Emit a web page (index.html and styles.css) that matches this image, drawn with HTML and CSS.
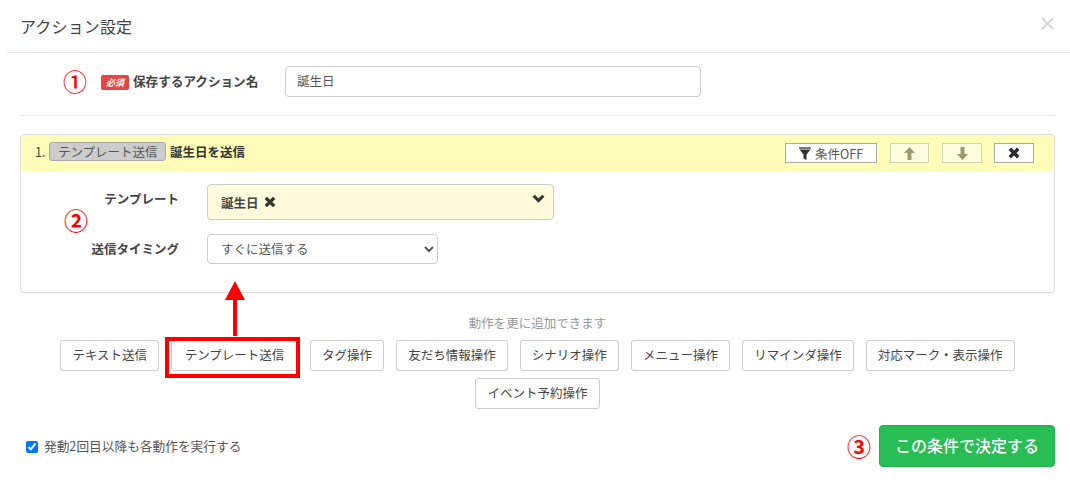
FILE: index.html
```html
<!DOCTYPE html>
<html lang="ja">
<head>
<meta charset="utf-8">
<title>アクション設定</title>
<link rel="stylesheet" href="styles.css">
</head>
<body>
<div class="modal">
  <header class="modal-header">
    <h1 class="modal-title">アクション設定</h1>
    <svg class="close" viewBox="0 0 12 12" width="13" height="13"><path d="M.8.8l10.400 10.400M11.200.8L.8 11.200" stroke="#d4d4d4" stroke-width="1.800" fill="none"/></svg>
  </header>
  <div class="body">
    <div class="name-row">
      <span class="mark mark-1">①</span>
      <label class="name-label"><span class="req">必須</span>保存するアクション名</label>
      <input class="name-input" type="text" value="誕生日">
    </div>
    <section class="card">
      <div class="card-head">
        <div class="card-title"><span class="num">1.</span><span class="type-tag">テンプレート送信</span><b>誕生日を送信</b></div>
        <div class="card-tools">
          <button class="tool tool-cond"><svg viewBox="0 0 12 13" width="12" height="13"><path d="M0 0h12v2H0z" fill="#777"/><path d="M.5 2.500h11L7.500 7.500V13L4.500 11.500v-4z" fill="#333"/></svg>条件OFF</button>
          <button class="tool tool-up"><svg viewBox="0 0 11 13" width="11" height="13"><path d="M5.500 0L11 6H7.500v7h-4V6H0z" fill="#9a9a70"/></svg></button>
          <button class="tool tool-down"><svg viewBox="0 0 11 13" width="11" height="13"><path d="M5.500 13L11 7H7.500V0h-4v7H0z" fill="#9a9a70"/></svg></button>
          <button class="tool tool-del"><svg viewBox="0 0 12 12" width="12" height="12"><path d="M1.800 1.800l8.400 8.400M10.200 1.800l-8.400 8.400" stroke="#2b2b2b" stroke-width="3.400" fill="none"/></svg></button>
        </div>
      </div>
      <div class="card-body">
        <div class="field field-template">
          <div class="field-label">テンプレート</div>
          <div class="tpl-select">
            <span class="tpl-value">誕生日<svg class="tpl-x" viewBox="0 0 12 12" width="12" height="12"><path d="M1.800 1.800l8.400 8.400M10.200 1.800l-8.400 8.400" stroke="#333" stroke-width="3.300" fill="none"/></svg></span>
            <svg class="tpl-caret" viewBox="0 0 12 8" width="13" height="9"><path d="M1.500 1.500L6 6l4.500-4.500" stroke="#333" stroke-width="2.800" fill="none"/></svg>
          </div>
        </div>
        <div class="field">
          <div class="field-label">送信タイミング</div>
          <select class="timing"><option>すぐに送信する</option></select>
        </div>
        <span class="mark mark-2">②</span>
      </div>
    </section>
    <div class="add-area">
      <p class="add-hint">動作を更に追加できます</p>
      <div class="add-buttons">
        <button class="add">テキスト送信</button>
        <button class="add add-hl">テンプレート送信<span class="hl-box"></span><span class="hl-arrow"></span></button>
        <button class="add">タグ操作</button>
        <button class="add">友だち情報操作</button>
        <button class="add">シナリオ操作</button>
        <button class="add">メニュー操作</button>
        <button class="add">リマインダ操作</button>
        <button class="add">対応マーク・表示操作</button>
        <button class="add">イベント予約操作</button>
      </div>
    </div>
    <div class="footer">
      <label class="repeat"><input type="checkbox" checked>発動2回目以降も各動作を実行する</label>
      <div class="submit-wrap">
        <span class="mark mark-3">③</span>
        <button class="submit">この条件で決定する</button>
      </div>
    </div>
  </div>
</div>
</body>
</html>
```
FILE: styles.css
```css
* { box-sizing: border-box; }
html, body { margin: 0; padding: 0; background: #fff; }
body {
  width: 1070px;
  height: 483px;
  overflow: hidden;
  font-family: "Noto Sans CJK JP", "Liberation Sans", sans-serif;
  color: #444;
}
.modal { padding-left: 7px; }
.modal-header {
  height: 53px;
  border-bottom: 1px solid #e5e5e5;
  display: flex;
  align-items: center;
  justify-content: space-between;
  padding: 0 16px 0 13px;
}
.modal-title { margin: 0; font-size: 16px; line-height: 24px; font-weight: 400; color: #444; letter-spacing: 0.15px; }
.close { margin-top: -5px; }
.body { padding: 0 15px 0 13px; }
.name-row {
  height: 63px;
  border-bottom: 1px solid #eaeaea;
  display: flex;
  align-items: center;
  padding-bottom: 6px;
  position: relative;
}
.name-label {
  display: flex;
  align-items: center;
  margin: 0 0 2px 81px;
  font-size: 12.6px;
  font-weight: 700;
  color: #444;
  white-space: nowrap;
  width: 184px;
}
.req {
  background: #e64545;
  color: #fff;
  font-size: 9px;
  font-weight: 700;
  font-style: italic;
  border-radius: 2px;
  width: 28px;
  height: 15px;
  line-height: 15px;
  text-align: center;
  margin: 5px 4px 0 0;
}
.name-input {
  width: 416px;
  height: 31px;
  border: 1px solid #ccc;
  border-radius: 4px;
  padding: 0 11px 2px;
  font: 12.5px "Noto Sans CJK JP", sans-serif;
  color: #555;
  background: #fff;
}
.mark { position: absolute; color: #f00; font-size: 24px; line-height: 24px; font-weight: 700; }
.mark-1 { left: 43px; top: 16px; font-weight: 500; }
.card {
  margin-top: 18px;
  height: 159px;
  border: 1px solid #dcdcdc;
  border-radius: 4px;
  overflow: hidden;
}
.card-head {
  height: 36px;
  background: #fffdb8;
  display: flex;
  align-items: center;
  justify-content: space-between;
  padding: 0 20px 0 14px;
}
.card-title { display: flex; align-items: center; font-size: 12.5px; color: #444; white-space: nowrap; padding-bottom: 3px; }
.num { margin-right: 4px; }
.type-tag {
  background: #ccc;
  border: 1px solid #aaa;
  border-radius: 3px;
  height: 19px;
  line-height: 17px;
  padding: 0 7.500px;
  font-size: 12.500px;
  color: #555;
  margin-right: 4px;
}
.card-title b { font-weight: 700; color: #333; }
.card-tools { display: flex; align-items: center; }
.tool {
  height: 20px;
  margin: 0;
  padding: 0;
  background: #fff;
  border: 1px solid #aaa;
  display: flex;
  align-items: center;
  justify-content: center;
  font: 12.500px "Noto Sans CJK JP", sans-serif;
  color: #555;
}
.tool-cond { width: 92px; gap: 4px; margin-right: 13px; }
.tool-up, .tool-down {
  background: #ffffe0;
  border-color: #d4d4b0;
}
.tool-up { width: 39px; margin-right: 13px; }
.tool-down { width: 40px; margin-right: 12px; }
.tool-del { width: 40px; }
.card-body { position: relative; padding-top: 13px; }
.field { display: flex; align-items: flex-start; }
.field-label {
  width: 158px;
  text-align: right;
  font-size: 12.500px;
  font-weight: 700;
  color: #444;
  margin-right: 28px;
  line-height: 30px;
}
.field-template { margin-bottom: 14px; }
.tpl-select {
  width: 347px;
  height: 36px;
  background: #fffbdb;
  border: 1px solid #ccc;
  border-radius: 4px;
  display: flex;
  justify-content: space-between;
  padding: 9px 8px 0 13px;
}
.tpl-value { display: flex; align-items: center; height: 16px; font-size: 12.500px; font-weight: 700; color: #444; }
.tpl-x { margin-left: 5px; }
.timing {
  width: 231px;
  height: 30px;
  border: 1px solid #ccc;
  border-radius: 4px;
  background: #fff;
  padding: 0 9px 2px;
  font: 12.500px "Noto Sans CJK JP", sans-serif;
  color: #555;
}
.mark-2 { left: 43px; top: 37px; }
.add-area { text-align: center; }
.add-hint { margin: 0; padding-top: 21px; height: 47px; font-size: 12.500px; line-height: 18px; color: #999; }
.add-buttons {
  display: flex;
  flex-wrap: wrap;
  justify-content: center;
  gap: 7px 12.150px;
}
.add {
  position: relative;
  height: 31px;
  padding: 0 11px 2px;
  margin: 0;
  background: #fff;
  border: 1px solid #ccc;
  border-radius: 3px;
  font: 12.500px "Noto Sans CJK JP", sans-serif;
  color: #444;
  white-space: nowrap;
}
.add-hl { padding: 0 12.500px 2px; }
.hl-box {
  position: absolute;
  left: -7px; right: -3px; top: -4px; bottom: -8px;
  border: 4px solid #f00;
}
.hl-arrow {
  position: absolute;
  left: 50%;
  top: -5px;
  width: 4px;
  height: 36px;
  margin-left: -2px;
  transform: translateY(-100%);
  background: #f00;
}
.hl-arrow::before {
  content: "";
  position: absolute;
  left: -8px;
  top: -19px;
  border-left: 10px solid transparent;
  border-right: 10px solid transparent;
  border-bottom: 19px solid #f00;
}
.footer {
  display: flex;
  justify-content: space-between;
  align-items: center;
  margin-top: 16px;
}
.repeat { display: flex; align-items: center; font-size: 12.700px; color: #555; padding-left: 6px; margin-bottom: 2px; }
.repeat input { margin: 3px 6px 0 0; width: 12px; height: 12px; }
.submit-wrap { display: flex; align-items: center; }
.mark-3 { position: static; margin-right: 8px; }
.submit {
  width: 176px;
  height: 42px;
  background: #28bd55;
  border: 1px solid #24b04e;
  border-radius: 4px;
  color: #fff;
  font: 500 16px "Noto Sans CJK JP", sans-serif;
  padding: 0 0 2px;
}
```
